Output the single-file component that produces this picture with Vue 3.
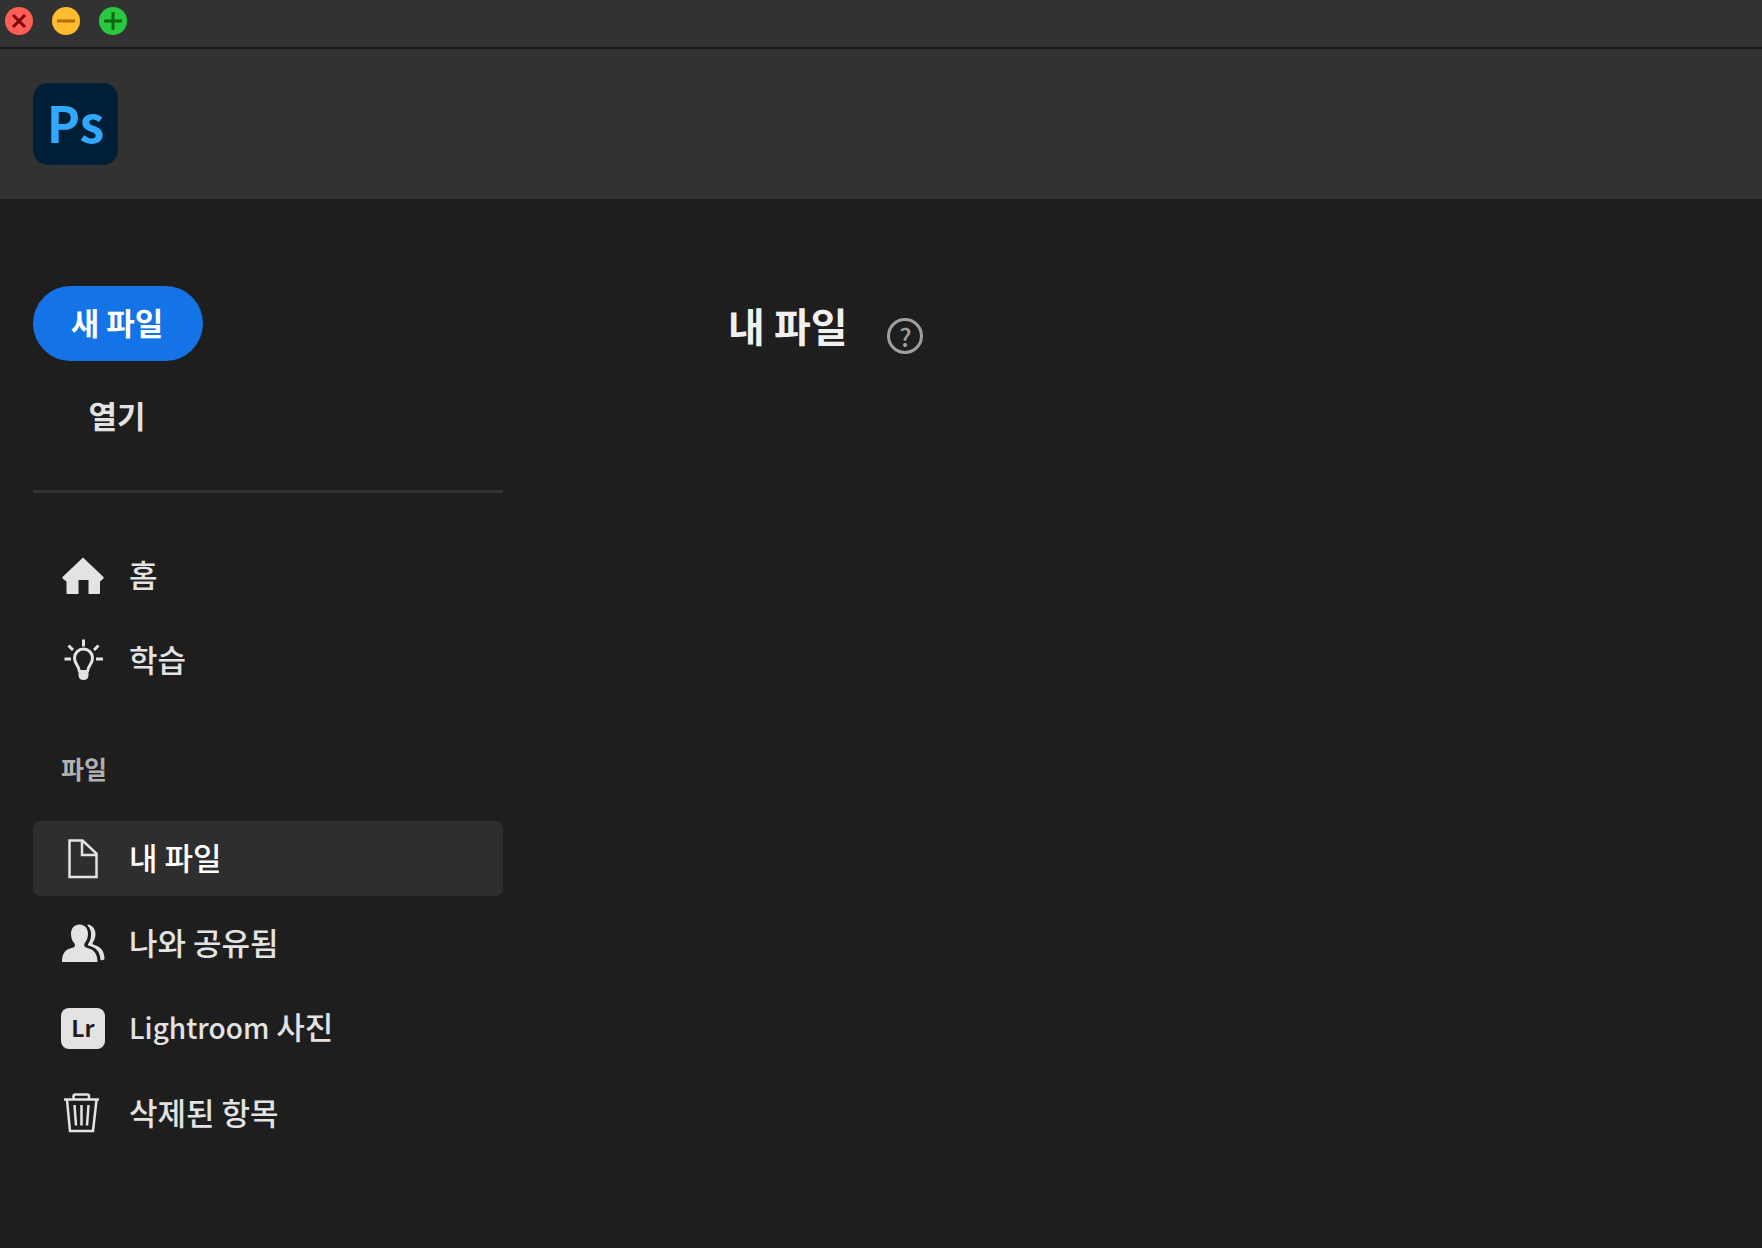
<template>
  <div class="app-window">
    <div class="title-bar">
      <button class="light close" aria-label="닫기">
        <svg viewBox="0 0 28 28"><path d="M8 8 L20 20 M20 8 L8 20" /></svg>
      </button>
      <button class="light minimize" aria-label="최소화">
        <svg viewBox="0 0 28 28"><path d="M5 14 H23" /></svg>
      </button>
      <button class="light zoom" aria-label="확대">
        <svg viewBox="0 0 28 28"><path d="M5 14 H23 M14 5 V23" /></svg>
      </button>
    </div>

    <header class="app-header">
      <div class="ps-logo">Ps</div>
    </header>

    <div class="app-body">
      <aside class="sidebar">
        <div class="actions">
          <button class="btn btn-primary">새 파일</button>
          <button class="btn btn-quiet">열기</button>
        </div>

        <hr class="divider">

        <nav class="nav">
          <!-- 상단 메뉴 -->
          <a href="#" class="nav-item" @click.prevent="active = 'home'" :class="{ active: active === 'home' }">
            <svg class="nav-icon" viewBox="0 0 44 44">
              <path class="fill" d="M22 3.500 L42.500 23 Q43 24 42 25 L39 27.500 V39 Q39 40 38 40 H27.500 V26 H17.500 V40 H6.500 Q5.500 40 5.500 39 V27.500 L2 25 Q1 24 1.500 23 Z" />
            </svg>
            <span class="nav-label">홈</span>
          </a>
          <a href="#" class="nav-item" @click.prevent="active = 'learn'" :class="{ active: active === 'learn' }">
            <svg class="nav-icon" viewBox="0 0 44 44">
              <path class="line" d="M22.500 0.500 V7.500 M7.500 6.500 L12 11 M37.500 6.500 L33 11 M3.500 20 H10 M35 20 H42" />
              <path class="line" d="M18.500 33 C18.500 27 13.500 25.500 13.500 19 A9 9 0 0 1 31.500 19 C31.500 25.500 26.500 27 26.500 33" />
              <path class="fill" d="M17.500 31 H27.500 V36 Q27.500 41 22.500 41 Q17.500 41 17.500 36 Z" />
            </svg>
            <span class="nav-label">학습</span>
          </a>

          <!-- 파일 메뉴 -->
          <h2 class="nav-title">파일</h2>
          <a
            v-for="item in fileItems"
            :key="item.id"
            href="#"
            class="nav-item"
            :class="{ active: active === item.id }"
            @click.prevent="active = item.id"
          >
            <svg v-if="item.id === 'files'" class="nav-icon" viewBox="0 0 44 44">
              <path class="line thin" d="M8.500 3.500 H21.500 L35.500 16.500 V40 H8.500 Z M21 4 V18 H35" />
            </svg>
            <svg v-else-if="item.id === 'shared'" class="nav-icon" viewBox="0 0 44 44">
              <path class="fill" d="M18.500 2.500 C23.500 2.500 27 6 27 12 C27 16.500 25 19.500 23.500 21.500 C22.700 24 23.500 25.300 26.500 26 C32.500 27.500 36.500 31 36.500 40 H1 C1 31 4.500 27.500 10.500 26 C14 25.200 14.500 24 13.500 21.500 C11.500 19.500 10 16.500 10 12 C10 6 13.500 2.500 18.500 2.500 Z" />
              <path class="fill" d="M26.500 2.500 C31.500 3 34.500 7 34.500 12 C34.500 16 33 19 31.500 21 Q31 22.500 33.500 23 C39.500 24.500 43.500 29 43.500 37 Q43 38.500 39.500 38 C39 29 34.500 25 27 23.500 L27 22 C31 17 31.500 8 26.500 3.500 Z" />
            </svg>
            <span v-else-if="item.id === 'lightroom'" class="lr-badge" aria-hidden="true">Lr</span>
            <svg v-else class="nav-icon" viewBox="0 0 44 44">
              <path class="line thin" d="M3 7.500 H38 M12.500 7 V4.500 Q12.500 2.500 14.500 2.500 H26.500 Q28 2.500 28 4.500 V7 M6 8 L9 39 H32 L35.500 8" />
              <path class="line thin" d="M13.500 13 L15 33.500 M20.500 13 V33.500 M27.500 13 L26 33.500" />
            </svg>
            <span class="nav-label">
              <span v-if="item.brand" class="brand">{{ item.brand }}</span>
              {{ item.label }}
            </span>
          </a>
        </nav>
      </aside>

      <main class="content">
        <div class="content-title">
          <h1>내 파일</h1>
          <button class="help-btn" aria-label="도움말">?</button>
        </div>
      </main>
    </div>
  </div>
</template>

<script setup>
import { ref } from 'vue'

const active = ref('files')

const fileItems = [
  { id: 'files', label: '내 파일' },
  { id: 'shared', label: '나와 공유됨' },
  { id: 'lightroom', brand: 'Lightroom', label: '사진' },
  { id: 'deleted', label: '삭제된 항목' }
]
</script>

<style>
body {
  background-color: #1e1e1e;
}
</style>

<style scoped>
.app-window {
  min-height: 100vh;
  box-sizing: border-box;
  display: flex;
  flex-direction: column;
  background-color: #1e1e1e;
  color: #e3e3e3;
  font-family: "Noto Sans CJK KR", sans-serif;
}

button {
  font-family: inherit;
  border: none;
  padding: 0;
  cursor: pointer;
}

.title-bar {
  display: flex;
  gap: 19px;
  padding: 7px 5px 12px;
  background-color: #323232;
}

.light {
  width: 28px;
  height: 28px;
  border-radius: 50%;
}

.light svg {
  display: block;
  fill: none;
  stroke-width: 3;
}

.close {
  background-color: #ff5f57;
  stroke: #7e0508;
}

.minimize {
  background-color: #febc2e;
  stroke: #b06f09;
}

.zoom {
  background-color: #28c840;
  stroke: #0b650d;
}

.app-header {
  padding: 34px 33px;
  border-top: 2px solid #181818;
  background-color: #323232;
}

.ps-logo {
  width: 85px;
  height: 82px;
  border-radius: 15px;
  background-color: #001e36;
  color: #31a8ff;
  font-size: 50px;
  font-weight: 700;
  line-height: 76px;
  text-align: center;
}

.app-body {
  display: flex;
  flex: 1;
  gap: 225px;
  padding: 87px 33px 32px;
}

.sidebar {
  width: 470px;
  flex-shrink: 0;
}

.actions {
  display: flex;
  flex-direction: column;
  align-items: flex-start;
  gap: 18px;
}

.btn {
  width: 170px;
  height: 75px;
  border-radius: 38px;
  font-size: 31px;
  font-weight: 700;
  line-height: 44px;
  padding: 0 2px 4px 0;
}

.btn-primary {
  background-color: #1473e6;
  color: #fff;
}

.btn-quiet {
  background-color: transparent;
  color: #e3e3e3;
}

.divider {
  height: 3px;
  margin: 36px 0 45px;
  border: none;
  background-color: #323232;
}

.nav {
  display: flex;
  flex-direction: column;
  gap: 10px;
}

.nav-item {
  display: flex;
  align-items: center;
  gap: 24px;
  height: 75px;
  box-sizing: border-box;
  padding: 0 28px;
  border-radius: 8px;
  color: #e3e3e3;
  font-size: 31px;
  font-weight: 500;
  line-height: 44px;
  text-decoration: none;
}

.nav-item.active {
  background-color: #2e2e2e;
  color: #fff;
}

.nav-label {
  padding-bottom: 4px;
}

.brand {
  font-size: 28px;
}

.nav-icon {
  width: 44px;
  height: 44px;
  flex-shrink: 0;
}

.fill {
  fill: #e3e3e3;
}

.line {
  fill: none;
  stroke: #e3e3e3;
  stroke-width: 3;
}

.thin {
  stroke-width: 2.500;
}

.lr-badge {
  width: 44px;
  height: 41px;
  border-radius: 8px;
  background-color: #e3e3e3;
  color: #1e1e1e;
  font-size: 23px;
  font-weight: 700;
  line-height: 38px;
  text-align: center;
}

.nav-title {
  margin: 42px 28px 25px;
  color: #b0b0b0;
  font-size: 25px;
  font-weight: 700;
  line-height: 36px;
}

.content {
  flex: 1;
}

.content-title {
  display: flex;
  align-items: center;
  gap: 40px;
}

h1 {
  margin: 11px 0;
  color: #f0f0f0;
  font-size: 40px;
  font-weight: 700;
  line-height: 56px;
}

.help-btn {
  width: 36px;
  height: 36px;
  margin-top: 22px;
  border: 3px solid #a0a0a0;
  border-radius: 50%;
  background-color: transparent;
  color: #a0a0a0;
  font-size: 25px;
  font-weight: 500;
  line-height: 28px;
}
</style>
